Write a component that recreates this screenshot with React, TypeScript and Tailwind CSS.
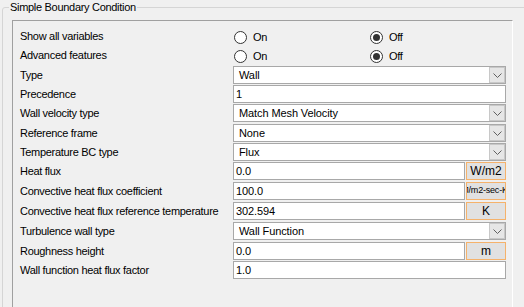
import React from 'react';

type Field =
  | { kind: 'radio'; label: string; on: boolean }
  | { kind: 'select'; label: string; value: string; mt: string }
  | { kind: 'text'; label: string; value: string; mt: string; unit?: string; small?: boolean };

const fields: Field[] = [
  { kind: 'radio', label: 'Show all variables', on: false },
  { kind: 'radio', label: 'Advanced features', on: false },
  { kind: 'select', label: 'Type', value: 'Wall', mt: 'mt-[1px]' },
  { kind: 'text', label: 'Precedence', value: '1', mt: 'mt-[1px]' },
  { kind: 'select', label: 'Wall velocity type', value: 'Match Mesh Velocity', mt: 'mt-[1px]' },
  { kind: 'select', label: 'Reference frame', value: 'None', mt: 'mt-[2px]' },
  { kind: 'select', label: 'Temperature BC type', value: 'Flux', mt: 'mt-[1px]' },
  { kind: 'text', label: 'Heat flux', value: '0.0', mt: 'mt-[1px]', unit: 'W/m2' },
  { kind: 'text', label: 'Convective heat flux coefficient', value: '100.0', mt: 'mt-[2px]', unit: 'J/m2-sec-K', small: true },
  { kind: 'text', label: 'Convective heat flux reference temperature', value: '302.594', mt: 'mt-[2px]', unit: 'K' },
  { kind: 'select', label: 'Turbulence wall type', value: 'Wall Function', mt: 'mt-[2px]' },
  { kind: 'text', label: 'Roughness height', value: '0.0', mt: 'mt-[2px]', unit: 'm' },
  { kind: 'text', label: 'Wall function heat flux factor', value: '1.0', mt: 'mt-[1px]' },
];

function Radio({ checked, text }: { checked: boolean; text: string }) {
  return (
    <label className="flex items-center gap-[6px] mt-[2px]">
      <span className="w-[13px] h-[13px] rounded-full border border-[#333333] bg-white flex items-center justify-center">
        {checked && <span className="w-[7px] h-[7px] rounded-full bg-[#333333]" />}
      </span>
      <span className="tracking-[-0.3px]">{text}</span>
    </label>
  );
}

function Chevron() {
  return (
    <svg width="9" height="5" viewBox="0 0 9 5" fill="none">
      <path d="M0.5 0.5 L4.5 4.5 L8.5 0.5" stroke="#606060" strokeWidth="1" />
    </svg>
  );
}

export default function App() {
  return (
    <div className="w-[524px] h-[307px] overflow-hidden bg-[#f0f0f0] text-[11px] text-black font-['Liberation_Sans',Arial,sans-serif]">
      <fieldset className="ml-[2px] w-[540px] h-[330px] border border-[#d5d5d5] rounded-[3px]">
        <legend className="ml-[6px] px-[1px] leading-[14px] tracking-[-0.3px]">Simple Boundary Condition</legend>

        <div className="ml-[9px] mt-[6px] w-[501px] h-[320px] border-t border-l border-r border-t-[#a0a0a0] border-l-[#a0a0a0] border-r-white pl-[7px] pt-[6px]">
          {fields.map((f) =>
            f.kind === 'radio' ? (
              <div key={f.label} className="flex items-center h-[19px]">
                <div className="w-[213px] tracking-[-0.3px]">{f.label}</div>
                <div className="flex">
                  <div className="w-[137px] pl-[1px]">
                    <Radio checked={f.on} text="On" />
                  </div>
                  <Radio checked={!f.on} text="Off" />
                </div>
              </div>
            ) : (
              <div key={f.label} className={`flex items-center h-[18px] ${f.mt}`}>
                <div className="w-[213px] tracking-[-0.3px] whitespace-nowrap">{f.label}</div>
                {f.kind === 'select' ? (
                  <div className="w-[273px] h-full bg-white border border-[#a8a8a8] flex items-center pl-[5px]">
                    <span className="flex-1 tracking-[-0.1px]">{f.value}</span>
                    <span className="w-[16px] h-[16px] bg-[#e6e6e6] border border-[#c8c8c8] flex items-center justify-center">
                      <Chevron />
                    </span>
                  </div>
                ) : (
                  <div className="w-[273px] h-full flex gap-[1px]">
                    <div className="flex-1 h-full bg-white border border-[#a8a8a8] flex items-center pl-[2px] tracking-[-0.1px]">
                      {f.value}
                    </div>
                    {f.unit && (
                      <button
                        className={`w-[40px] h-full bg-[#e1e1e1] border border-[#f5b26b] flex items-center justify-center overflow-hidden whitespace-nowrap ${
                          f.small ? 'text-[9px] tracking-[-0.2px]' : 'text-[12px]'
                        }`}
                      >
                        {f.unit}
                      </button>
                    )}
                  </div>
                )}
              </div>
            ),
          )}
        </div>
      </fieldset>
    </div>
  );
}
